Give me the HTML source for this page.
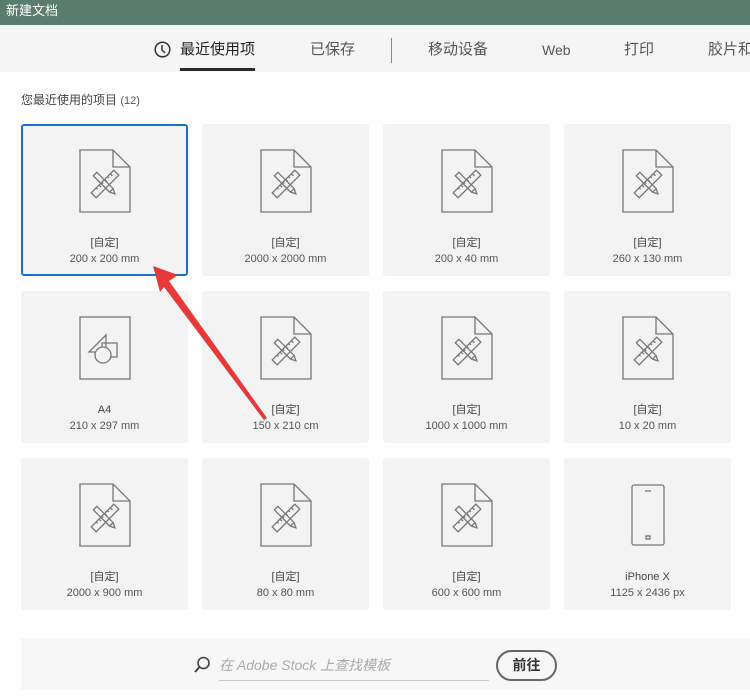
<!DOCTYPE html>
<html><head><meta charset="utf-8"><style>
*{margin:0;padding:0;box-sizing:border-box}
body{width:750px;height:696px;overflow:hidden;background:#fff;font-family:"Liberation Sans","Noto Sans CJK SC",sans-serif;position:relative;color:#333}
.title{position:absolute;left:0;top:0;width:750px;height:25px;background:#5a7c6e;color:#fff;font-size:13px;line-height:22px;padding-left:6px}
.tabs{position:absolute;left:0;top:25px;width:750px;height:47px;background:#f5f5f5}
.tab{position:absolute;top:15px;font-size:15px;line-height:20px;color:#555;white-space:nowrap}
.sub{position:absolute;left:21px;top:91px;font-size:12px;color:#444}
.card{position:absolute;width:167px;height:152px;background:#f3f3f3;border-radius:3px}
.card.sel{border:2px solid #1b72c9;background:#f3f3f3}
.card svg{position:absolute;left:58px;top:25px}
.l1,.l2{position:absolute;left:0;width:100%;text-align:center;font-size:11px;line-height:15px;color:#444}
.l1{top:112px}.l2{top:128px;color:#555}
.sel .l1{top:110px}.sel .l2{top:126px}
.sel svg{left:56px;top:23px}
</style></head><body>
<svg width="0" height="0" style="position:absolute">
<symbol id="doc" viewBox="0 0 52 64"><g fill="none" stroke="#777" stroke-width="1.3"><path d="M1 1H34L51 18V63H1Z M34 1V18H51"/>
<g transform="translate(26 35) rotate(45)"><rect x="-3.5" y="-16" width="7" height="32"/><path d="M-3.5 -11h3M-3.5 -7h2M-3.5 -3h3M-3.5 1h2M-3.5 5h3M-3.5 9h2"/></g>
<g transform="translate(26 35) rotate(-45)"><path d="M-2.5 -14h5v23l-2.5 5l-2.5 -5z M-2.5 9h5"/></g></g></symbol>
</svg>
<div class="title">新建文档</div>
<div class="tabs">
<svg style="position:absolute;left:154px;top:16px" width="17" height="17" viewBox="0 0 17 17"><circle cx="8.5" cy="8.5" r="7.3" fill="none" stroke="#333" stroke-width="1.5"/><path d="M8 4v5l3 3" fill="none" stroke="#333" stroke-width="1.5"/></svg>
<div class="tab" style="left:180px;color:#222">最近使用项</div>
<div style="position:absolute;left:180px;top:43px;width:75px;height:3px;background:#2a2a2a"></div>
<div class="tab" style="left:310px">已保存</div>
<div style="position:absolute;left:391px;top:13px;width:1px;height:25px;background:#888"></div>
<div class="tab" style="left:428px">移动设备</div>
<div class="tab" style="left:542px;font-size:14px;top:15px">Web</div>
<div class="tab" style="left:624px">打印</div>
<div class="tab" style="left:708px">胶片和</div>
</div>
<div class="sub">您最近使用的项目 <span style="font-size:11px;color:#555">(12)</span></div>

<div class="card sel" style="left:21px;top:124px"><svg width="52" height="64"><use href="#doc"/></svg><div class="l1">[自定]</div><div class="l2">200 x 200 mm</div></div>
<div class="card" style="left:202px;top:124px"><svg width="52" height="64"><use href="#doc"/></svg><div class="l1">[自定]</div><div class="l2">2000 x 2000 mm</div></div>
<div class="card" style="left:383px;top:124px"><svg width="52" height="64"><use href="#doc"/></svg><div class="l1">[自定]</div><div class="l2">200 x 40 mm</div></div>
<div class="card" style="left:564px;top:124px"><svg width="52" height="64"><use href="#doc"/></svg><div class="l1">[自定]</div><div class="l2">260 x 130 mm</div></div>

<div class="card" style="left:21px;top:291px"><svg width="52" height="64" viewBox="0 0 52 64"><g fill="none" stroke="#777" stroke-width="1.3"><rect x="1" y="1" width="50" height="62"/><path d="M10 36L27 19V36Z"/><rect x="23" y="27" width="15" height="14"/><circle cx="24" cy="39" r="8" fill="#f3f3f3"/></g></svg><div class="l1">A4</div><div class="l2">210 x 297 mm</div></div>
<div class="card" style="left:202px;top:291px"><svg width="52" height="64"><use href="#doc"/></svg><div class="l1">[自定]</div><div class="l2">150 x 210 cm</div></div>
<div class="card" style="left:383px;top:291px"><svg width="52" height="64"><use href="#doc"/></svg><div class="l1">[自定]</div><div class="l2">1000 x 1000 mm</div></div>
<div class="card" style="left:564px;top:291px"><svg width="52" height="64"><use href="#doc"/></svg><div class="l1">[自定]</div><div class="l2">10 x 20 mm</div></div>

<div class="card" style="left:21px;top:458px"><svg width="52" height="64"><use href="#doc"/></svg><div class="l1">[自定]</div><div class="l2">2000 x 900 mm</div></div>
<div class="card" style="left:202px;top:458px"><svg width="52" height="64"><use href="#doc"/></svg><div class="l1">[自定]</div><div class="l2">80 x 80 mm</div></div>
<div class="card" style="left:383px;top:458px"><svg width="52" height="64"><use href="#doc"/></svg><div class="l1">[自定]</div><div class="l2">600 x 600 mm</div></div>
<div class="card" style="left:564px;top:458px"><svg width="52" height="64" viewBox="0 0 52 64" style="left:66px"><g fill="none" stroke="#777" stroke-width="1.3"><rect x="2" y="2" width="32" height="60" rx="2"/><path d="M15 8h6"/><rect x="16" y="53" width="4" height="3"/></g></svg><div class="l1">iPhone X</div><div class="l2">1125 x 2436 px</div></div>

<div style="position:absolute;left:21px;top:638px;width:729px;height:52px;background:#f7f7f7"></div>
<svg style="position:absolute;left:193px;top:656px" width="18" height="18" viewBox="0 0 18 18"><circle cx="10.5" cy="7" r="5.5" fill="none" stroke="#444" stroke-width="1.6"/><path d="M6.5 11L2 16" stroke="#444" stroke-width="2"/></svg>
<div style="position:absolute;left:219px;top:655px;font-size:14px;color:#aaa;font-style:italic">在 Adobe Stock 上查找模板</div>
<div style="position:absolute;left:219px;top:680px;width:270px;height:1px;background:#ccc"></div>
<div style="position:absolute;left:496px;top:650px;width:61px;height:31px;border:2px solid #666;border-radius:16px;font-size:14px;font-weight:bold;color:#333;text-align:center;line-height:27px">前往</div>

<svg style="position:absolute;left:0;top:0" width="750" height="696"><polygon points="153,266 178,275 169,281 267,418 264,420 164,287 160,292" fill="#e8393a"/></svg>
</body></html>
